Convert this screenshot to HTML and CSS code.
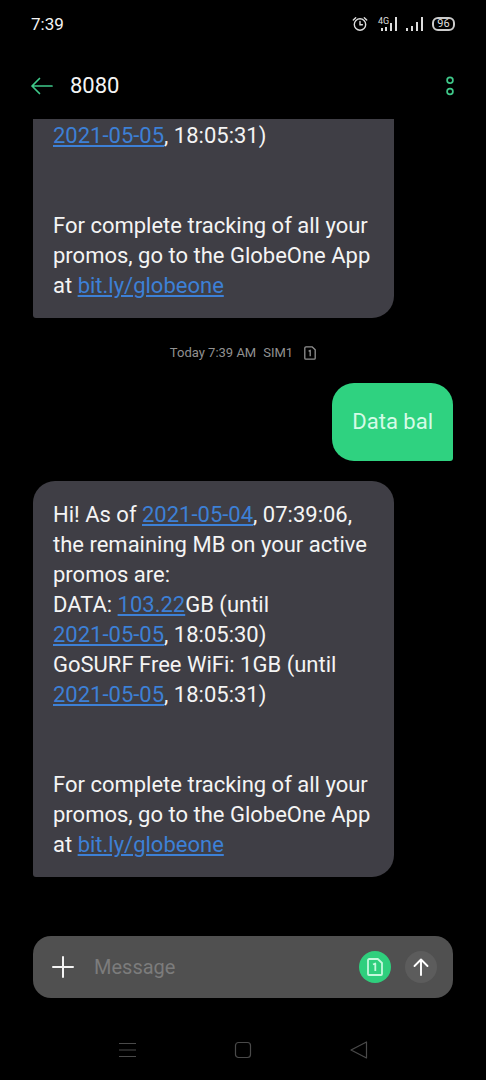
FILE: index.html
```html
<!DOCTYPE html>
<html lang="en">
<head>
  <meta charset="utf-8">
  <meta name="viewport" content="width=device-width, initial-scale=1">
  <title>8080</title>
  <link rel="stylesheet" href="styles.css">
</head>
<body class="phone">
  <div class="status">
    <span class="status-time">7:39</span>
    <div class="status-icons">
      <svg class="alarm" width="16" height="16" viewBox="0 0 16 16" fill="none" stroke="currentColor" stroke-width="1.4" stroke-linecap="round">
        <circle cx="8" cy="8.5" r="5.7"/>
        <path d="M8 5.5v3.2h2.4M1.3 4l2.4-2.3M14.7 4l-2.4-2.3"/>
      </svg>
      <div class="mobile">
        <span class="network">4G</span>
        <svg width="18" height="14" viewBox="0 0 18 14" fill="currentColor">
          <path d="M1 11h2v3H1zM5 10h2v4H5zM10 6h2v8h-2zM15 0h2v14h-2z"/>
        </svg>
      </div>
      <svg width="18" height="14" viewBox="0 0 18 14" fill="currentColor">
        <path d="M0 11h2v3H0zM5 9h2v5H5zM10 5h2v9h-2zM15 0h2v14h-2z"/>
      </svg>
      <span class="battery">96</span>
    </div>
  </div>

  <header class="header">
    <button class="icon-button back" aria-label="Back">
      <svg width="24" height="20" viewBox="0 0 24 20" fill="none" stroke="currentColor" stroke-width="1.7" stroke-linecap="round" stroke-linejoin="round">
        <path d="M22 10H2M9.5 2.5L2 10l7.500 7.500"/>
      </svg>
    </button>
    <h1 class="title">8080</h1>
    <button class="icon-button more" aria-label="More options">
      <svg width="10" height="22" viewBox="0 0 10 22" fill="none" stroke="currentColor" stroke-width="1.7">
        <circle cx="5" cy="5.300" r="2.900"/>
        <circle cx="5" cy="16.500" r="2.900"/>
      </svg>
    </button>
  </header>

  <main class="thread">
    <article class="bubble received clipped"><a href="#">2021-05-05</a>, 18:05:31)


For complete tracking of all your promos, go to the GlobeOne App at <a href="#">bit.ly/globeone</a></article>

    <div class="stamp">
      <span>Today 7:39 AM</span>
      <span>SIM1</span>
      <svg class="stamp-sim" width="12" height="14" viewBox="0 0 12 14" fill="none" stroke="currentColor" stroke-width="1.300" stroke-linejoin="round">
        <path d="M2 .8h6l3.200 3v8.400a1 1 0 0 1-1 1H1.800a1 1 0 0 1-1-1V2A1.200 1.200 0 0 1 2 .8zM4.600 5.200L6.200 4.300v5.900"/>
      </svg>
    </div>

    <article class="bubble sent">Data bal</article>

    <article class="bubble received">Hi! As of <a href="#">2021-05-04</a>, 07:39:06, the remaining MB on your active promos are:
DATA: <a href="#">103.22</a>GB (until <a href="#">2021-05-05</a>, 18:05:30)
GoSURF Free WiFi: 1GB (until <a href="#">2021-05-05</a>, 18:05:31)


For complete tracking of all your promos, go to the GlobeOne App at <a href="#">bit.ly/globeone</a></article>
  </main>

  <form class="composer">
    <button class="icon-button" type="button" aria-label="Add attachment">
      <svg width="22" height="22" viewBox="0 0 22 22" fill="none" stroke="currentColor" stroke-width="2" stroke-linecap="round">
        <path d="M11 1v20M1 11h20"/>
      </svg>
    </button>
    <input class="message" type="text" placeholder="Message" aria-label="Message">
    <button class="round sim" type="button" aria-label="Send with SIM 1">
      <svg width="16" height="18" viewBox="0 0 16 18" fill="none" stroke="currentColor" stroke-width="1.800" stroke-linejoin="round">
        <path d="M2.200 1h8.600L15 5v11a1 1 0 0 1-1 1H2a1 1 0 0 1-1-1V2.200A1.200 1.200 0 0 1 2.200 1zM6 6.500L8.300 5.500v7.500"/>
      </svg>
    </button>
    <button class="round send" type="button" aria-label="Send">
      <svg width="16" height="18" viewBox="0 0 16 18" fill="none" stroke="currentColor" stroke-width="1.900" stroke-linecap="round" stroke-linejoin="round">
        <path d="M8 17V1.500M1.500 8L8 1.500 14.500 8"/>
      </svg>
    </button>
  </form>

  <nav class="nav">
    <button class="icon-button" aria-label="Recent apps">
      <svg width="18" height="18" viewBox="0 0 18 18" fill="none" stroke="currentColor" stroke-width="1.200">
        <path d="M1 2.500h17M1 9h17M1 15.500h17"/>
      </svg>
    </button>
    <button class="icon-button" aria-label="Home">
      <svg width="18" height="18" viewBox="0 0 18 18" fill="none" stroke="currentColor" stroke-width="1.200">
        <rect x="1.500" y="1.500" width="15" height="15" rx="3"/>
      </svg>
    </button>
    <button class="icon-button" aria-label="Back">
      <svg width="18" height="18" viewBox="0 0 18 18" fill="none" stroke="currentColor" stroke-width="1.200" stroke-linejoin="round">
        <path d="M16.500 1v16L1 9z"/>
      </svg>
    </button>
  </nav>
</body>
</html>
```

FILE: styles.css
```css
* {
  box-sizing: border-box;
}

.phone {
  display: flex;
  flex-direction: column;
  min-height: 100vh;
  margin: 0;
  background: #000;
  color: #f4f4f4;
  font-family: Roboto, "Liberation Sans", sans-serif;
}

button {
  padding: 0;
  border: 0;
  background: none;
  color: inherit;
  font: inherit;
}

.icon-button,
.round {
  display: flex;
  align-items: center;
  justify-content: center;
  flex: none;
}

/* Status bar */
.status {
  display: flex;
  align-items: center;
  justify-content: space-between;
  height: 48px;
  padding: 0 31px;
}

.status-time {
  font-size: 17px;
}

.status-icons {
  display: flex;
  align-items: center;
  gap: 8px;
  color: #ddd;
}

.alarm {
  margin-right: 4px;
}

.mobile {
  display: flex;
  position: relative;
}

.network {
  position: absolute;
  top: -1px;
  left: -2px;
  font-size: 9px;
  line-height: 10px;
}

.battery {
  width: 23px;
  height: 14px;
  border: 2px solid #ccc;
  border-radius: 6px;
  font-size: 11px;
  line-height: 10px;
  text-align: center;
}

/* Conversation header */
.header {
  display: flex;
  align-items: center;
  height: 71px;
  padding: 4px 31px 0 30px;
  color: #3fc98a;
}

.title {
  flex: 1;
  margin: 0 0 0 16px;
  color: #f4f4f4;
  font-size: 22px;
  font-weight: 400;
  line-height: 30px;
}

/* Messages */
.thread {
  display: flex;
  flex: 1;
  flex-direction: column;
  padding: 0 33px;
}

.bubble {
  font-size: 22px;
  line-height: 30px;
  white-space: pre-wrap;
}

.bubble a {
  color: #3d80d6;
  text-underline-offset: 2px;
  white-space: nowrap;
}

.received {
  align-self: flex-start;
  width: 86%;
  padding: 19px 20px 17px;
  border-radius: 22px 22px 22px 3px;
  background: #3f3e45;
}

.clipped {
  padding-top: 2px;
  border-radius: 0 0 22px 3px;
}

.stamp {
  display: flex;
  align-items: center;
  justify-content: center;
  gap: 7px;
  padding: 25px 0 20px;
  color: #919191;
  font-size: 13px;
  line-height: 20px;
}

.stamp-sim {
  margin-left: 4px;
}

.sent {
  align-self: flex-end;
  margin-bottom: 20px;
  padding: 24px 20px;
  border-radius: 22px 22px 3px 22px;
  background: #2fd280;
  color: #d5fbe7;
}

/* Message box */
.composer {
  display: flex;
  align-items: center;
  height: 62px;
  margin: 0 33px 22px;
  padding: 0 16px 0 19px;
  border-radius: 18px;
  background: #505050;
}

.message {
  flex: 1;
  min-width: 0;
  margin-left: 20px;
  padding: 0;
  border: 0;
  outline: 0;
  background: none;
  color: #f4f4f4;
  font: inherit;
  font-size: 20px;
}

.message::placeholder {
  color: #7c7c7c;
  opacity: 1;
}

.round {
  width: 32px;
  height: 32px;
  border-radius: 50%;
}

.sim {
  background: #2fcf7d;
  color: #c5f8dd;
}

.send {
  margin-left: 14px;
  background: #5c5c5c;
  color: #fff;
}

/* System navigation */
.nav {
  display: grid;
  grid-template-columns: repeat(3, 1fr);
  height: 60px;
  padding: 0 69px;
  color: #4a4a4a;
}
```
